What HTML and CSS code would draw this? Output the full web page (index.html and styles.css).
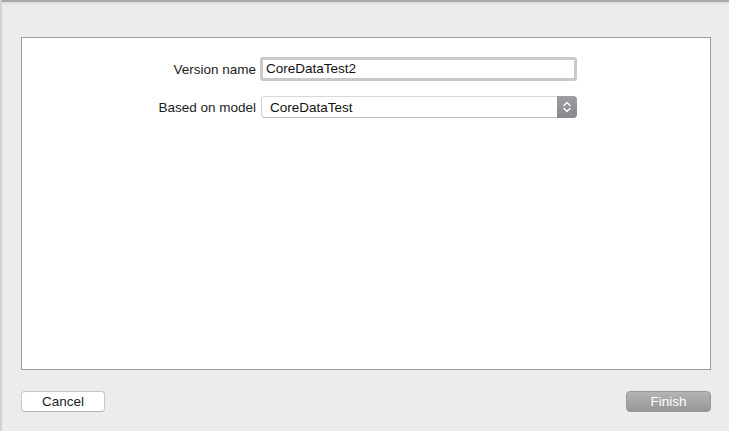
FILE: index.html
```html
<!DOCTYPE html>
<html>
<head>
<meta charset="utf-8">
<link rel="stylesheet" href="styles.css">
</head>
<body>
<div class="window">
  <div class="topline"></div>
  <div class="panel">
    <div class="form">
      <label class="label">Version name</label>
      <div class="textfield">CoreDataTest2</div>
      <label class="label">Based on model</label>
      <div class="popup">
        <span class="popup-text">CoreDataTest</span>
        <span class="stepper">
          <svg width="10" height="16" viewBox="0 0 10 16">
            <path d="M2 6.5 L5 3.5 L8 6.5" fill="none" stroke="#fff" stroke-width="1.4" stroke-linecap="round" stroke-linejoin="round"/>
            <path d="M2 9.5 L5 12.5 L8 9.5" fill="none" stroke="#fff" stroke-width="1.4" stroke-linecap="round" stroke-linejoin="round"/>
          </svg>
        </span>
      </div>
    </div>
  </div>
  <div class="footer">
    <button class="btn btn-cancel">Cancel</button>
    <button class="btn btn-finish">Finish</button>
  </div>
</div>
</body>
</html>
```
FILE: styles.css
```css
html, body {
  margin: 0;
  padding: 0;
}
body {
  width: 729px;
  height: 431px;
  overflow: hidden;
  background: #ececec;
  font-family: "Liberation Sans", Arial, sans-serif;
  font-size: 13.5px;
  color: #1a1a1a;
}
.window {
  height: 431px;
  display: flex;
  flex-direction: column;
  border-left: 2px solid #d2d2d2;
  box-sizing: border-box;
}
.topline {
  height: 2px;
  background: #a9a9a9;
  box-shadow: 0 1px 3px rgba(0,0,0,0.12);
}
.panel {
  margin: 35px 0 0 19px;
  width: 688px;
  height: 331px;
  background: #fff;
  border: 1px solid #9b9b9b;
}
.form {
  display: grid;
  grid-template-columns: 234px 317px;
  column-gap: 4px;
  row-gap: 15px;
  align-items: center;
  padding-top: 19px;
}
.label {
  text-align: right;
  color: #1c1c1c;
}
.textfield {
  height: 24px;
  box-sizing: border-box;
  border: 3px solid #c9c9c9;
  border-radius: 3px;
  padding: 0 0 0 3px;
  line-height: 18px;
  color: #111;
}
.popup {
  margin-left: 1px;
  height: 22px;
  box-sizing: border-box;
  border: 1px solid #cfcfcf;
  border-top-color: #d9d9d9;
  border-bottom-color: #bcbcbc;
  border-radius: 4px;
  display: flex;
  align-items: center;
  background: #fff;
}
.popup-text {
  flex: 1;
  padding-left: 8px;
  color: #111;
}
.stepper {
  width: 20px;
  height: 22px;
  margin: -1px -1px -1px 0;
  background: linear-gradient(#9d9da2, #88888d);
  border-radius: 0 4px 4px 0;
  display: flex;
  align-items: center;
  justify-content: center;
}
.stepper svg {
  display: block;
}
.footer {
  display: flex;
  justify-content: space-between;
  padding: 21px 18px 0 19px;
}
.btn {
  font-family: "Liberation Sans", Arial, sans-serif;
  font-size: 13.5px;
  height: 21px;
  border-radius: 4px;
  padding: 0;
  box-sizing: border-box;
}
.btn-cancel {
  width: 84px;
  background: #fff;
  border: 1px solid #c6c6c6;
  border-bottom-color: #b4b4b4;
  color: #1a1a1a;
}
.btn-finish {
  width: 85px;
  background: linear-gradient(#b4b4b4, #969696);
  border: 1px solid #999;
  color: #fff;
}
```
